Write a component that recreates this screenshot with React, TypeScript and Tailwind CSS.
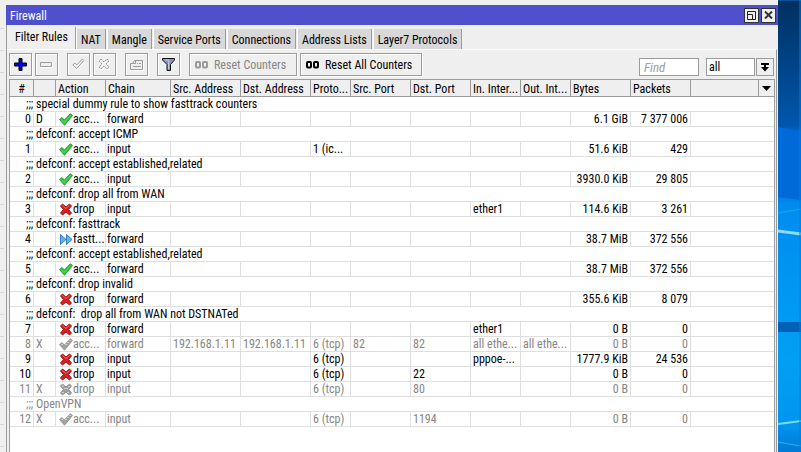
import { ReactNode } from 'react'
import clsx from 'clsx'

type IconKind = 'accept' | 'drop' | 'fasttrack'

type Rule = {
	comment?: string
	id: number
	flag?: string
	icon: IconKind
	action: string
	chain: string
	src?: string
	dst?: string
	proto?: string
	srcPort?: string
	dstPort?: string
	inIf?: string
	outIf?: string
	bytes: string
	packets: string
}

const TABS = ['Filter Rules', 'NAT', 'Mangle', 'Service Ports', 'Connections', 'Address Lists', 'Layer7 Protocols']

const COLUMNS = [
	{ label: '#', width: 'w-[24px]' },
	{ label: '', width: 'w-[22px]' },
	{ label: 'Action', width: 'w-[50px]' },
	{ label: 'Chain', width: 'w-[65px]' },
	{ label: 'Src. Address', width: 'w-[70px]' },
	{ label: 'Dst. Address', width: 'w-[70px]' },
	{ label: 'Proto...', width: 'w-[40px]' },
	{ label: 'Src. Port', width: 'w-[60px]' },
	{ label: 'Dst. Port', width: 'w-[60px]' },
	{ label: 'In. Inter...', width: 'w-[50px]' },
	{ label: 'Out. Int...', width: 'w-[50px]' },
	{ label: 'Bytes', width: 'w-[60px]' },
	{ label: 'Packets', width: 'w-[60px]' },
	{ label: '', width: '' },
]

const RULES: Rule[] = [
	{ comment: 'special dummy rule to show fasttrack counters', id: 0, flag: 'D', icon: 'accept', action: 'acc...', chain: 'forward', bytes: '6.1 GiB', packets: '7 377 006' },
	{ comment: 'defconf: accept ICMP', id: 1, icon: 'accept', action: 'acc...', chain: 'input', proto: '1 (ic...', bytes: '51.6 KiB', packets: '429' },
	{ comment: 'defconf: accept established,related', id: 2, icon: 'accept', action: 'acc...', chain: 'input', bytes: '3930.0 KiB', packets: '29 805' },
	{ comment: 'defconf: drop all from WAN', id: 3, icon: 'drop', action: 'drop', chain: 'input', inIf: 'ether1', bytes: '114.6 KiB', packets: '3 261' },
	{ comment: 'defconf: fasttrack', id: 4, icon: 'fasttrack', action: 'fastt...', chain: 'forward', bytes: '38.7 MiB', packets: '372 556' },
	{ comment: 'defconf: accept established,related', id: 5, icon: 'accept', action: 'acc...', chain: 'forward', bytes: '38.7 MiB', packets: '372 556' },
	{ comment: 'defconf: drop invalid', id: 6, icon: 'drop', action: 'drop', chain: 'forward', bytes: '355.6 KiB', packets: '8 079' },
	{ comment: 'defconf:  drop all from WAN not DSTNATed', id: 7, icon: 'drop', action: 'drop', chain: 'forward', inIf: 'ether1', bytes: '0 B', packets: '0' },
	{ id: 8, flag: 'X', icon: 'accept', action: 'acc...', chain: 'forward', src: '192.168.1.11', dst: '192.168.1.11', proto: '6 (tcp)', srcPort: '82', dstPort: '82', inIf: 'all ethe...', outIf: 'all ethe...', bytes: '0 B', packets: '0' },
	{ id: 9, icon: 'drop', action: 'drop', chain: 'input', proto: '6 (tcp)', inIf: 'pppoe-...', bytes: '1777.9 KiB', packets: '24 536' },
	{ id: 10, icon: 'drop', action: 'drop', chain: 'input', proto: '6 (tcp)', dstPort: '22', bytes: '0 B', packets: '0' },
	{ id: 11, flag: 'X', icon: 'drop', action: 'drop', chain: 'input', proto: '6 (tcp)', dstPort: '80', bytes: '0 B', packets: '0' },
	{ comment: 'OpenVPN', id: 12, flag: 'X', icon: 'accept', action: 'acc...', chain: 'input', proto: '6 (tcp)', dstPort: '1194', bytes: '0 B', packets: '0' },
]

const ActionIcon = ({ kind, off }: { kind: IconKind; off: boolean }) => {
	if (kind === 'fasttrack')
		return (
			<svg width="14" height="13" viewBox="0 0 14 13" className="shrink-0">
				<path d="M1.5 1.5 7 6.5l-5.500 5z" fill="#58b4f0" stroke="#1769b5" strokeWidth="0.8" />
				<path d="M7.500 1.500 13 6.500l-5.500 5z" fill="#58b4f0" stroke="#1769b5" strokeWidth="0.8" />
			</svg>
		)
	if (kind === 'drop')
		return (
			<svg width="14" height="13" viewBox="0 0 14 13" className="shrink-0">
				<path
					d="M3.500 1 7 4 10.500 1 12.500 3 9.500 6.500 12.500 10 10.500 12 7 9 3.500 12 1.500 10 4.500 6.500 1.500 3z"
					fill={off ? '#a0a0a0' : '#d42020'}
					stroke={off ? '#909090' : '#a31414'}
				/>
				{!off && <path d="m3.500 2.500 3.500 3 3.500-3" fill="none" stroke="#ec6a60" />}
				{off && <path d="M4 2.500v2M6 5v2M8 5v1M10 3v2M4 9v2M9 9v2" stroke="#fff" strokeDasharray="1 1" />}
			</svg>
		)
	return (
		<svg width="14" height="13" viewBox="0 0 14 13" className="shrink-0">
			<path
				d="M.5 6.500 3 4.500l2.300 2.500L11.300.800 13.500 2.500 5.500 12.300z"
				fill={off ? '#a0a0a0' : '#2fc43c'}
				stroke={off ? '#909090' : '#14882a'}
				strokeWidth="0.8"
			/>
			{!off && <path d="m2 6.500 3 3 6.500-7" fill="none" stroke="#62df66" />}
			{off && <path d="M3 6v2M9 4v2M11 2v2M7 6v2" stroke="#fff" strokeDasharray="1 1" />}
		</svg>
	)
}

const ToolButton = ({ label, className, children }: { label: string; className?: string; children: ReactNode }) => (
	<button
		type="button"
		aria-label={label}
		className={clsx(
			'flex h-[23px] shrink-0 items-center border border-[#9b9b9b] bg-[#efefef] shadow-[inset_1px_1px_0_#fff,1px_1px_0_#fff]',
			className ?? 'w-[23px] justify-center'
		)}
	>
		{children}
	</button>
)

const CountersIcon = ({ color }: { color: string }) => (
	<svg width="14" height="9" viewBox="0 0 14 9" fill="none" stroke={color} strokeWidth="2" className="shrink-0">
		<rect x="1" y="2" width="4" height="5.500" rx="1" />
		<rect x="8" y="2" width="4" height="5.500" rx="1" />
	</svg>
)

const Toolbar = () => (
	<div className="flex h-[23px] items-center pr-px">
		<div className="flex gap-[3px]">
			<ToolButton label="Add">
				<svg width="13" height="13" viewBox="0 0 13 13">
					<path d="M5 .500h3V5h4.500v3H8v4.500H5V8H.500V5H5z" fill="#0000f4" stroke="#000" />
				</svg>
			</ToolButton>
			<ToolButton label="Remove">
				<svg width="13" height="13" viewBox="0 0 13 13">
					<path d="M1.500 5.500h11v4h-11z" fill="none" stroke="#fff" />
					<path d="M.500 4.500h11v4H.500z" fill="#efefef" stroke="#9b9b9b" />
				</svg>
			</ToolButton>
		</div>
		<div className="ml-[9px] flex gap-[3px]">
			<ToolButton label="Enable">
				<svg width="13" height="13" viewBox="0 0 13 13" fill="none">
					<path d="m1.500 8 2-2 2 2 5.500-6 1.500 1.500-7 8z" stroke="#fff" />
					<path d="m.8 7 2-2 2 2 5.500-6 1.500 1.500-7 8z" stroke="#9b9b9b" />
				</svg>
			</ToolButton>
			<ToolButton label="Disable">
				<svg width="13" height="13" viewBox="0 0 13 13" fill="none">
					<path d="M4 2l3 3 3-3 2 2-3 3 3 3-2 2-3-3-3 3-2-2 3-3-3-3z" stroke="#fff" />
					<path d="M3 1l3 3 3-3 2 2-3 3 3 3-2 2-3-3-3 3-2-2 3-3-3-3z" stroke="#999" strokeDasharray="2 .700" />
				</svg>
			</ToolButton>
		</div>
		<div className="ml-[9px] flex gap-[9px]">
			<ToolButton label="Comment">
				<svg width="14" height="12" viewBox="0 0 14 12" fill="none">
					<path d="M1 11.500h12.500V2" stroke="#fff" />
					<path d="M.500 10.500v-6h2l2-3h8v9zM2.500 4.500h3v-3M7 4.500h1M9 4.500h2M3 7.500h8" stroke="#999" />
				</svg>
			</ToolButton>
			<ToolButton label="Filter">
				<svg width="13" height="13" viewBox="0 0 13 13">
					<path d="M.500.500h12v1.500l-4 4.500v6h-3.500v-6L.500 2z" fill="#8295c4" stroke="#111" />
					<path d="M3 2h4l-.500 4v5" fill="none" stroke="#c5d0ec" />
				</svg>
			</ToolButton>
		</div>
		<div className="ml-[9px] flex gap-[3px] whitespace-nowrap">
			<ToolButton label="Reset Counters" className="w-[108px] gap-[5px] pl-[5px] text-[#858585]">
				<CountersIcon color="#999" />
				Reset Counters
			</ToolButton>
			<ToolButton label="Reset All Counters" className="w-[122px] gap-[5px] pl-[5px]">
				<CountersIcon color="#000" />
				Reset All Counters
			</ToolButton>
		</div>
		<div className="ml-auto flex self-end">
			<input
				type="text"
				aria-label="Find"
				placeholder="Find"
				className="mr-[7px] h-[18px] w-[60px] border border-[#9b9b9b] bg-white px-1 text-[13px] italic outline-none placeholder:text-[#a0a0a0]"
			/>
			<select
				aria-label="Search column"
				className="h-[18px] w-[49px] appearance-none border border-[#9b9b9b] bg-white pl-[2px] outline-none"
			>
				<option>all</option>
			</select>
			<button
				type="button"
				aria-label="Show columns"
				className="ml-[1px] flex h-[18px] w-[18px] items-center justify-center border border-[#9b9b9b] bg-[#efefef]"
			>
				<svg width="8" height="9" viewBox="0 0 8 9">
					<path d="M0 0h8v2H5v2h3L4 8.500 0 4h3V2H0z" />
				</svg>
			</button>
		</div>
	</div>
)

const Cell = ({ children, className }: { children?: ReactNode; className?: string }) => (
	<td className={clsx('overflow-hidden border-r border-b border-[#dfdfdf] whitespace-nowrap', className ?? 'pl-[2px]')}>
		{children}
	</td>
)

const RuleRows = ({ rule }: { rule: Rule }) => {
	const off = rule.flag === 'X'
	return (
		<>
			{rule.comment && (
				<tr className={clsx('h-[15px]', off && 'text-[#858585]')}>
					<td colSpan={15} className="border-b border-[#dfdfdf] pl-4 whitespace-pre">
						;;; {rule.comment}
					</td>
				</tr>
			)}
			<tr className={clsx('h-[15px]', off && 'text-[#858585]')}>
				<Cell className="pr-[2px] text-right">{rule.id}</Cell>
				<Cell>{rule.flag}</Cell>
				<Cell className="pl-[3px]">
					<span className="flex h-[14px] items-center">
						<ActionIcon kind={rule.icon} off={off} />
						{rule.action}
					</span>
				</Cell>
				<Cell className="pl-[1px]">{rule.chain}</Cell>
				<Cell>{rule.src}</Cell>
				<Cell>{rule.dst}</Cell>
				<Cell>{rule.proto}</Cell>
				<Cell>{rule.srcPort}</Cell>
				<Cell>{rule.dstPort}</Cell>
				<Cell>{rule.inIf}</Cell>
				<Cell>{rule.outIf}</Cell>
				<Cell className="pr-[2px] text-right">{rule.bytes}</Cell>
				<Cell className="pr-[2px] text-right">{rule.packets}</Cell>
				<td colSpan={2} className="border-b border-[#dfdfdf]" />
			</tr>
		</>
	)
}

const RuleTable = () => (
	<div className="flex-1 border-x border-t border-[#9b9b9b] bg-white">
		<table className="w-full table-fixed border-separate border-spacing-0 leading-[14px]">
			<thead>
				<tr className="h-[17px] bg-[#efefef]">
					{COLUMNS.map((col, i) => (
						<th
							key={i}
							className={clsx(
								'overflow-hidden border-r border-b border-[#9b9b9b] pt-[2px] font-normal whitespace-nowrap',
								i === 0 ? 'text-center' : 'pl-[2px] text-left',
								col.width
							)}
						>
							{col.label}
						</th>
					))}
					<th className="w-[15px] border-b border-[#9b9b9b]">
						<button type="button" aria-label="Columns" className="mx-auto block">
							<svg width="9" height="5" viewBox="0 0 9 5">
								<path d="M0 0h9L4.500 5z" />
							</svg>
						</button>
					</th>
				</tr>
			</thead>
			<tbody>
				{RULES.map(rule => (
					<RuleRows key={rule.id} rule={rule} />
				))}
			</tbody>
		</table>
	</div>
)

const TitleBar = () => (
	<div className="flex h-5 items-center gap-[2px] bg-[#4e50cc] pr-[2px] pl-1 text-white">
		<span className="flex-1 pt-[2px]">Firewall</span>
		<button
			type="button"
			aria-label="Maximize"
			className="flex h-[15px] w-[15px] items-center justify-center border border-[#333] bg-[#efefef]"
		>
			<svg width="9" height="9" viewBox="0 0 9 9" fill="none" stroke="#222">
				<path d="M.500.500h8v8h-8zM.500 3.500h5v5" />
			</svg>
		</button>
		<button
			type="button"
			aria-label="Close"
			className="flex h-[15px] w-[15px] items-center justify-center border border-[#333] bg-[#efefef]"
		>
			<svg width="9" height="8" viewBox="0 0 9 8" fill="none" stroke="#333" strokeWidth="2">
				<path d="m1 .500 7 7M8 .500l-7 7" />
			</svg>
		</button>
	</div>
)

const Tabs = () => (
	<div role="tablist" className="flex h-6 items-end pl-px">
		{TABS.map((tab, i) => (
			<button
				key={tab}
				type="button"
				role="tab"
				aria-selected={i === 0}
				className={clsx(
					'border-r border-[#9b9b9b] whitespace-nowrap',
					i === 0 ? 'h-[22px] bg-[#efefef] px-[7px] pb-[2px]' : 'mr-px h-5 border-l border-l-white bg-[#d8d8d8] px-1 pt-[2px]'
				)}
			>
				{tab}
			</button>
		))}
	</div>
)

const Desktop = () => (
	<svg className="h-full w-[23px] shrink-0" viewBox="0 0 23 452" preserveAspectRatio="none">
		<defs>
			<linearGradient id="sky" x1="0" y1="0" x2="0" y2="1">
				<stop offset="0" stopColor="#01305f" />
				<stop offset="0.280" stopColor="#0057ae" />
				<stop offset="0.290" stopColor="#0069d0" />
				<stop offset="0.430" stopColor="#0074df" />
				<stop offset="0.450" stopColor="#008cef" />
				<stop offset="0.800" stopColor="#00a0f4" />
				<stop offset="0.940" stopColor="#0095ef" />
				<stop offset="1" stopColor="#0078d4" />
			</linearGradient>
		</defs>
		<path d="M0 0h23v452H0z" fill="url(#sky)" />
		<path d="M0 127l23 5v68L0 197z" fill="#006bd8" />
		<path d="M0 213l23-4" stroke="#18a8e8" />
		<path d="M0 231l23 3" stroke="#8bdcf5" strokeWidth="3" />
		<path d="M0 322h23v10H0z" fill="#0060b8" />
		<path d="M0 424l23-3" stroke="#79dcf5" strokeWidth="2" />
		<path d="M0 442l23 4" stroke="#24b3ee" />
		<path d="M22 0v452M0 0h23" stroke="#0878d8" />
	</svg>
)

const App = () => (
	<div className="flex h-screen overflow-hidden bg-[#efefef] font-['Roboto_Condensed','Liberation_Sans',sans-serif] text-[12px] leading-4 text-black">
		<div className="w-[6px] shrink-0 pt-[7px]">
			{Array.from({ length: 20 }, (_, i) => (
				<div key={i} className="mr-[2px] h-[22px] border-b border-[#d9d9d9]" />
			))}
		</div>
		<main className="flex min-w-0 flex-1 flex-col pt-[5px]">
			<TitleBar />
			<div className="flex flex-1 flex-col border-l border-[#9b9b9b]">
				<Tabs />
				<div className="mr-px flex flex-1 flex-col border-t border-r border-t-white border-r-[#9b9b9b] pt-[3px] pr-px pl-[2px]">
					<Toolbar />
					<div className="mt-[3px] flex flex-1 flex-col">
						<RuleTable />
					</div>
				</div>
			</div>
		</main>
		<Desktop />
	</div>
)

export default App
